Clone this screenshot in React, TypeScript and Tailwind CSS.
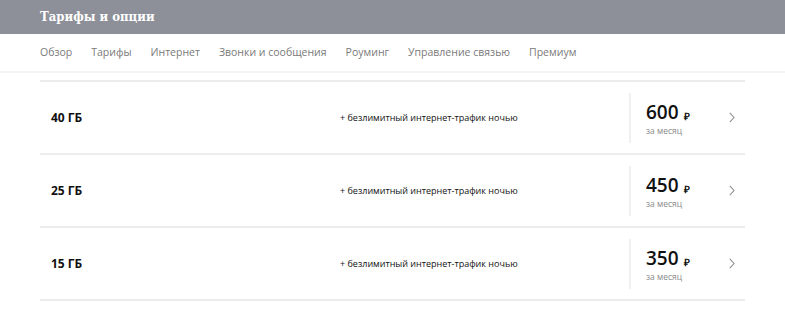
const tabs = ['Обзор', 'Тарифы', 'Интернет', 'Звонки и сообщения', 'Роуминг', 'Управление связью', 'Премиум']

const plans = [
  { name: '40 ГБ', note: '+ безлимитный интернет-трафик ночью', price: 600 },
  { name: '25 ГБ', note: '+ безлимитный интернет-трафик ночью', price: 450 },
  { name: '15 ГБ', note: '+ безлимитный интернет-трафик ночью', price: 350 },
]

function Chevron() {
  return (
    <svg width="6" height="11" viewBox="0 0 6 11" fill="none" className="text-[#8f8f8f]">
      <path d="M0.8 0.8 L5 5.5 L0.8 10.2" stroke="currentColor" strokeWidth="1.1" />
    </svg>
  )
}

function PlanRow({ name, note, price }: { name: string; note: string; price: number }) {
  return (
    <div className="flex h-[73px] items-center border-b-2 border-[#ececec]">
      <div className="w-[300px] pl-[11px] text-[12px] font-bold text-[#111]">{name}</div>
      <div className="w-[289px] text-[9px] text-[#111]">{note}</div>
      <div className="h-[50px] w-[2px] bg-[#f0f0f0]" />
      <div className="flex flex-1 items-center pl-[15px]">
        <div className="flex flex-col pt-[3px]">
          <div className="flex h-[19px] items-end leading-none">
            <span className="text-[19px] font-semibold text-[#111]">{price}</span>
            <span className="mb-[1px] ml-[5px] text-[10px] font-bold text-[#111]">₽</span>
          </div>
          <div className="mt-[4px] text-[8.5px] leading-[9px] text-[#8a8a8a]">за месяц</div>
        </div>
        <div className="ml-auto mr-[10px] flex">
          <Chevron />
        </div>
      </div>
    </div>
  )
}

export default function App() {
  return (
    <div className="min-h-[309px] w-[785px] bg-white" style={{ fontFamily: '"Open Sans", sans-serif' }}>
      <div className="flex h-[34px] items-center bg-[#8d9098] px-10">
        <h1
          className="font-stretch-condensed text-[13px] font-bold text-white"
          style={{ fontFamily: '"DejaVu Serif Condensed", "DejaVu Serif", serif' }}
        >
          Тарифы и опции
        </h1>
      </div>
      <nav className="flex h-[39px] items-center gap-[19px] border-b-2 border-[#f4f4f4] px-10 text-[10.5px] text-[#7a7a7a]">
        {tabs.map(t => (
          <span key={t}>{t}</span>
        ))}
      </nav>
      <div className="px-10 pt-[7px]">
        <div className="border-t-2 border-[#ececec]">
          {plans.map(p => (
            <PlanRow key={p.name} {...p} />
          ))}
        </div>
      </div>
    </div>
  )
}
